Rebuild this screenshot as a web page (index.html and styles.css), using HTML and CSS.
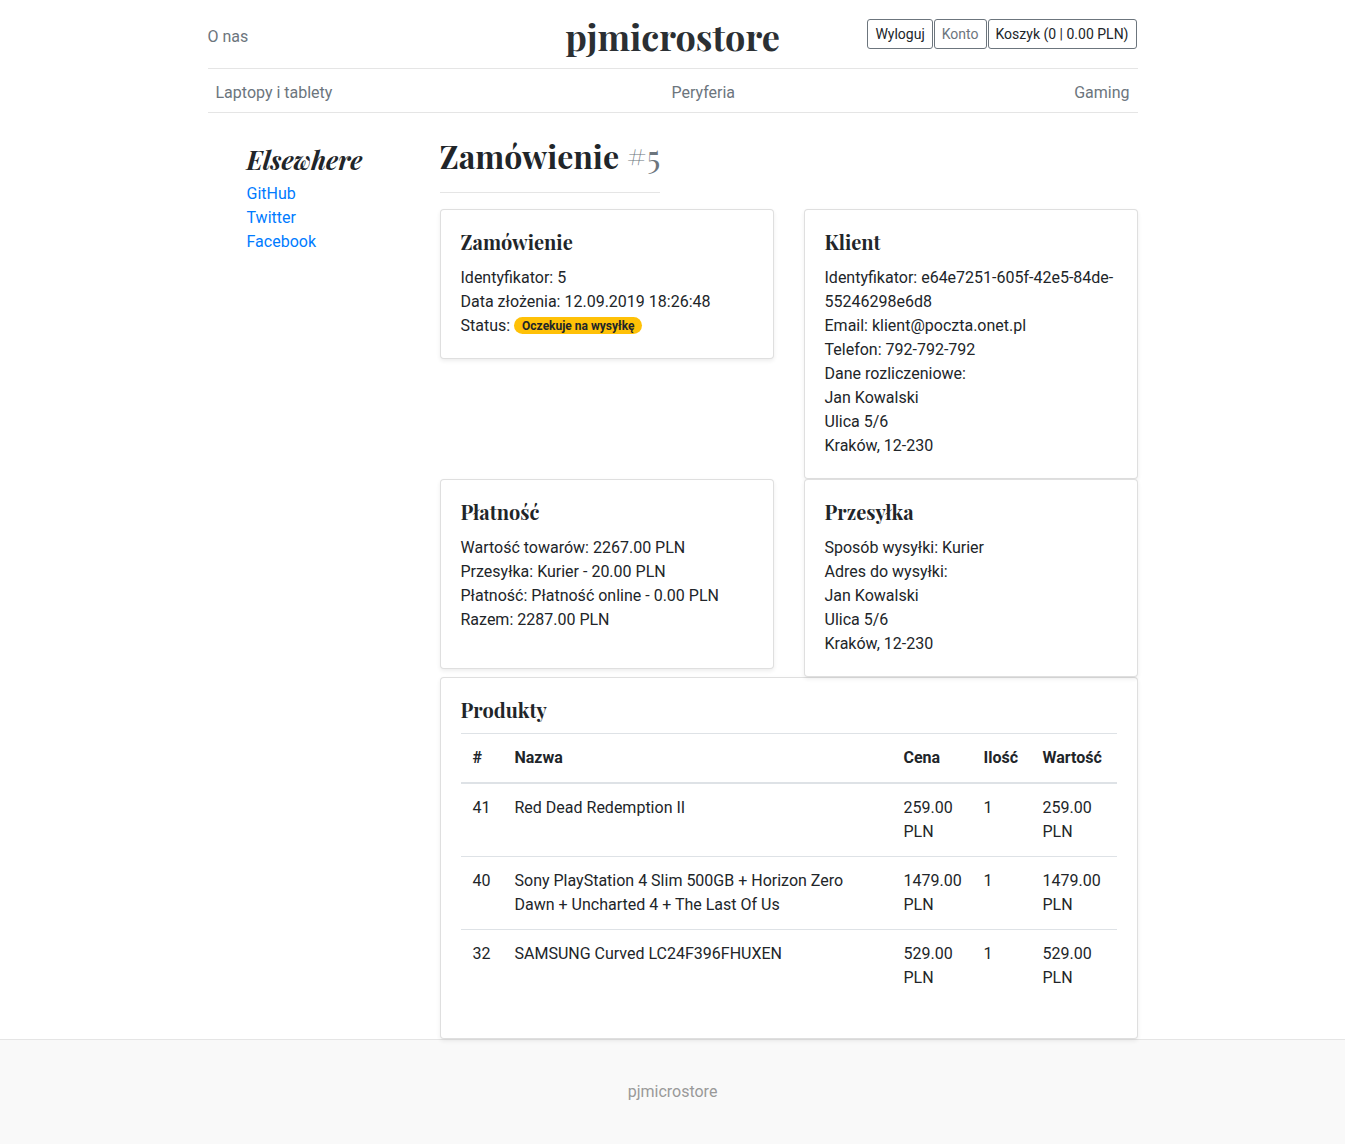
FILE: index.html
```html
<!DOCTYPE html>
<html lang="pl">
<head>
<meta charset="utf-8">
<title>pjmicrostore - Zamówienie #5</title>
<link rel="stylesheet" href="styles.css">
</head>
<body>
<div class="container">
  <header class="blog-header">
    <div class="header-left"><a class="muted-link" href="#">O nas</a></div>
    <a class="blog-header-logo" href="#">pjmicrostore</a>
    <div class="header-right">
      <a class="btn btn-dark-text" href="#">Wyloguj</a>
      <a class="btn" href="#">Konto</a>
      <a class="btn btn-dark-text" href="#">Koszyk (0 | 0.00 PLN)</a>
    </div>
  </header>
  <nav class="nav-scroller">
    <a class="nav-link" href="#">Laptopy i tablety</a>
    <a class="nav-link" href="#">Peryferia</a>
    <a class="nav-link" href="#">Gaming</a>
  </nav>
</div>

<main class="container main-row">
  <aside class="blog-sidebar">
    <h4 class="sidebar-title">Elsewhere</h4>
    <ol class="sidebar-list">
      <li><a href="#">GitHub</a></li>
      <li><a href="#">Twitter</a></li>
      <li><a href="#">Facebook</a></li>
    </ol>
  </aside>

  <section class="blog-main">
    <h2 class="page-title">Zamówienie <small class="title-muted">#5</small></h2>

    <div class="card-grid">
      <div class="card">
        <h5 class="card-title">Zamówienie</h5>
        <div class="card-text">
          Identyfikator: 5<br>
          Data złożenia: 12.09.2019 18:26:48<br>
          Status: <span class="badge">Oczekuje na wysyłkę</span>
        </div>
      </div>

      <div class="card">
        <h5 class="card-title">Klient</h5>
        <div class="card-text">
          Identyfikator: e64e7251-605f-42e5-84de-55246298e6d8<br>
          Email: klient@poczta.onet.pl<br>
          Telefon: 792-792-792<br>
          Dane rozliczeniowe:<br>
          Jan Kowalski<br>
          Ulica 5/6<br>
          Kraków, 12-230
        </div>
      </div>

      <div class="card">
        <h5 class="card-title">Płatność</h5>
        <p class="card-text card-text-p">
          Wartość towarów: 2267.00 PLN<br>
          Przesyłka: Kurier - 20.00 PLN<br>
          Płatność: Płatność online - 0.00 PLN<br>
          Razem: 2287.00 PLN
        </p>
      </div>

      <div class="card">
        <h5 class="card-title">Przesyłka</h5>
        <div class="card-text">
          Sposób wysyłki: Kurier<br>
          Adres do wysyłki:<br>
          Jan Kowalski<br>
          Ulica 5/6<br>
          Kraków, 12-230
        </div>
      </div>
    </div>

    <div class="card card-products">
      <h5 class="card-title card-title-products">Produkty</h5>
      <table class="table">
        <colgroup>
          <col class="col-id">
          <col class="col-name">
          <col class="col-price">
          <col class="col-qty">
          <col class="col-total">
        </colgroup>
        <thead>
          <tr><th>#</th><th>Nazwa</th><th>Cena</th><th>Ilość</th><th>Wartość</th></tr>
        </thead>
        <tbody>
          <tr><td>41</td><td>Red Dead Redemption II</td><td>259.00 PLN</td><td>1</td><td>259.00 PLN</td></tr>
          <tr><td>40</td><td>Sony PlayStation 4 Slim 500GB + Horizon Zero Dawn + Uncharted 4 + The Last Of Us</td><td>1479.00 PLN</td><td>1</td><td>1479.00 PLN</td></tr>
          <tr><td>32</td><td>SAMSUNG Curved LC24F396FHUXEN</td><td>529.00 PLN</td><td>1</td><td>529.00 PLN</td></tr>
        </tbody>
      </table>
    </div>
  </section>
</main>

<footer class="blog-footer">
  <p>pjmicrostore</p>
</footer>
</body>
</html>
```

FILE: styles.css
```css
* { box-sizing: border-box; }

html, body {
  margin: 0;
  padding: 0;
}

body {
  font-family: "Segoe UI", Roboto, "Noto Sans", "Liberation Sans", sans-serif;
  font-size: 16px;
  line-height: 24px;
  color: #212529;
  background: #fff;
}

a { text-decoration: none; }

.container {
  width: 930px;
  margin: 0 auto;
}

/* Header */
.blog-header {
  height: 69px;
  display: grid;
  grid-template-columns: 1fr auto 1fr;
  align-items: center;
  border-bottom: 1px solid #e5e5e5;
  line-height: 1;
}

.header-left { padding-top: 5px; }

.muted-link {
  color: #6c757d;
  font-size: 16px;
}

.blog-header-logo {
  font-family: "Playfair Display", "Liberation Serif", "Times New Roman", serif;
  font-weight: 700;
  font-size: 36px;
  color: #2b2f33;
  padding-top: 3px;
}

.header-right {
  display: flex;
  justify-content: flex-end;
  gap: 1px;
  padding-right: 1px;
}

.btn {
  display: inline-block;
  font-size: 14px;
  line-height: 20px;
  padding: 4px 7px;
  border: 1px solid #6c757d;
  border-radius: 3px;
  color: #6c757d;
  background: #fff;
}

.btn-dark-text { color: #212529; }

/* Nav */
.nav-scroller {
  height: 44px;
  display: flex;
  justify-content: space-between;
  align-items: center;
  padding-top: 4px;
  border-bottom: 1px solid #e5e5e5;
}

.nav-link {
  color: #6c757d;
  padding: 0 8px;
  font-size: 16px;
}

/* Main */
.main-row {
  display: flex;
  align-items: flex-start;
}

.blog-sidebar {
  width: 232px;
  flex-shrink: 0;
  padding: 32px 0 0 39px;
}

.sidebar-title {
  font-family: "Playfair Display", "Liberation Serif", "Times New Roman", serif;
  font-style: italic;
  font-weight: 700;
  font-size: 26px;
  line-height: 29px;
  margin: 0 0 8px;
  color: #212529;
}

.sidebar-list {
  list-style: none;
  margin: 0;
  padding: 0;
}

.sidebar-list a { color: #007bff; }

.blog-main {
  flex: 1;
  min-width: 0;
}

.page-title {
  display: block;
  width: fit-content;
  font-family: "Playfair Display", "Liberation Serif", "Times New Roman", serif;
  font-weight: 700;
  font-size: 32px;
  line-height: 36px;
  margin: 25px 0 16px;
  padding-bottom: 18px;
  border-bottom: 1px solid #e5e5e5;
  color: #212529;
}

.title-muted {
  font-size: 32px;
  font-weight: 400;
  color: #6c757d;
}

.card-grid {
  display: grid;
  grid-template-columns: 334px 334px;
  column-gap: 30px;
  row-gap: 0;
  align-items: start;
}

.card {
  border: 1px solid rgba(0, 0, 0, 0.125);
  border-radius: 4px;
  padding: 20px;
  background: #fff;
  box-shadow: 0 2px 4px rgba(0, 0, 0, 0.075);
}

.card-title {
  font-family: "Playfair Display", "Liberation Serif", "Times New Roman", serif;
  font-weight: 700;
  font-size: 20px;
  line-height: 24px;
  margin: 0 0 12px;
  color: #212529;
}

.card-text { margin: 0; }

.card-text-p { margin-bottom: 16px; }

.badge {
  display: inline-block;
  background: #ffc107;
  color: #212529;
  font-size: 12px;
  font-weight: 700;
  line-height: 1;
  padding: 3px 8px 2px;
  border-radius: 10rem;
  vertical-align: 1px;
}

/* Products */
.card-products {
  margin-top: 0;
}

.card-title-products { margin-bottom: 11px; }

.table {
  width: 100%;
  table-layout: fixed;
  border-collapse: collapse;
  margin-bottom: 16px;
}

.col-id { width: 42px; }
.col-price { width: 80px; }
.col-qty { width: 59px; }
.col-total { width: 86px; }

.table th,
.table td {
  padding: 12px;
  text-align: left;
  vertical-align: top;
  border-top: 1px solid #dee2e6;
}

.table thead th {
  font-weight: 700;
  border-bottom: 2px solid #dee2e6;
}

/* Footer */
.blog-footer {
  margin-top: 0;
  padding: 40px 0;
  text-align: center;
  color: #999;
  background: #f9f9f9;
  border-top: 1px solid #e5e5e5;
}

.blog-footer p { margin: 0; }
```
